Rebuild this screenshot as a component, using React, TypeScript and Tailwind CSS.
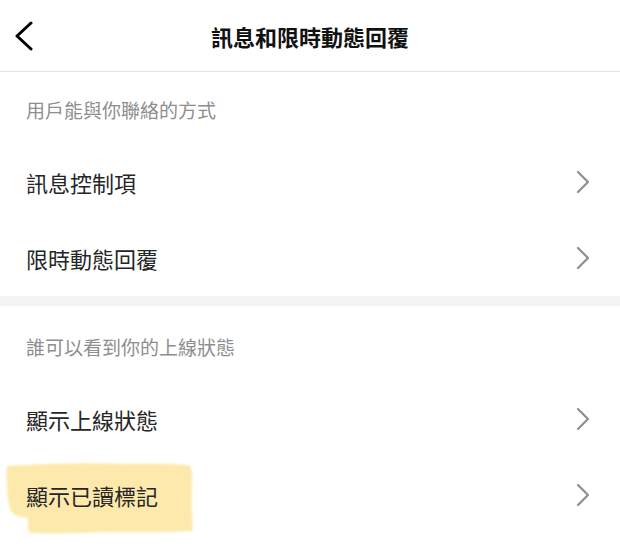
const FONT = { fontFamily: '"Noto Sans CJK TC", "Noto Sans", sans-serif' }

// ── One tappable settings row ──────────────
function Row({ label, marked = false }: { label: string; marked?: boolean }) {
  return (
    <div className="relative flex h-[76px] items-center justify-between pl-[26px] pr-[30px]">
      {marked && (
        <svg
          className="absolute left-[4px] top-[4px]"
          width="192"
          height="76"
          viewBox="0 0 192 76"
        >
          <defs>
            <filter id="soft" x="-5%" y="-5%" width="110%" height="110%">
              <feGaussianBlur stdDeviation="1.2" />
            </filter>
          </defs>
          <path
            d="M3,5 Q60,1 120,3 Q160,2 184,4 Q189,6 188,20 Q187,45 189,70 Q150,72 100,71 Q60,73 28,72 Q23,71 24,62 L24,57 Q12,57 7,50 Q3,40 3,25 Q2,12 3,5 Z"
            fill="#fde9ab"
            filter="url(#soft)"
          />
        </svg>
      )}
      <span className="relative text-[22px] leading-[28px] text-[#262626]">{label}</span>
      <svg width="14" height="24" viewBox="0 0 14 24">
        <path d="M2,2 L12,12 L2,22" fill="none" stroke="#8e8e8e" strokeWidth="2.2" strokeLinecap="round" strokeLinejoin="round" />
      </svg>
    </div>
  )
}

function SectionTitle({ text, top }: { text: string; top: string }) {
  return (
    <div className={`${top} pb-[22px] pl-[26px] text-[19px] leading-[24px] text-[#8e8e8e]`}>
      {text}
    </div>
  )
}

export default function App() {
  return (
    <div className="h-[553px] w-[620px] overflow-hidden bg-white" style={FONT}>

      {/* Top bar */}
      <div className="relative flex h-[72px] items-center justify-center border-b border-[#e4e4e4]">
        <svg className="absolute left-[13px] top-[21px]" width="22" height="30" viewBox="0 0 22 30">
          <path d="M18,2 L4,15 L18,28" fill="none" stroke="#000" strokeWidth="3" strokeLinecap="round" strokeLinejoin="round" />
        </svg>
        <h1 className="text-[22px] font-bold leading-[28px] text-[#111]">訊息和限時動態回覆</h1>
      </div>

      <SectionTitle text="用戶能與你聯絡的方式" top="pt-[26px]" />
      <Row label="訊息控制項" />
      <Row label="限時動態回覆" />

      <div className="h-[10px] bg-[#f4f4f4]" />

      <SectionTitle text="誰可以看到你的上線狀態" top="pt-[29px]" />
      <Row label="顯示上線狀態" />
      <Row label="顯示已讀標記" marked />
    </div>
  )
}
